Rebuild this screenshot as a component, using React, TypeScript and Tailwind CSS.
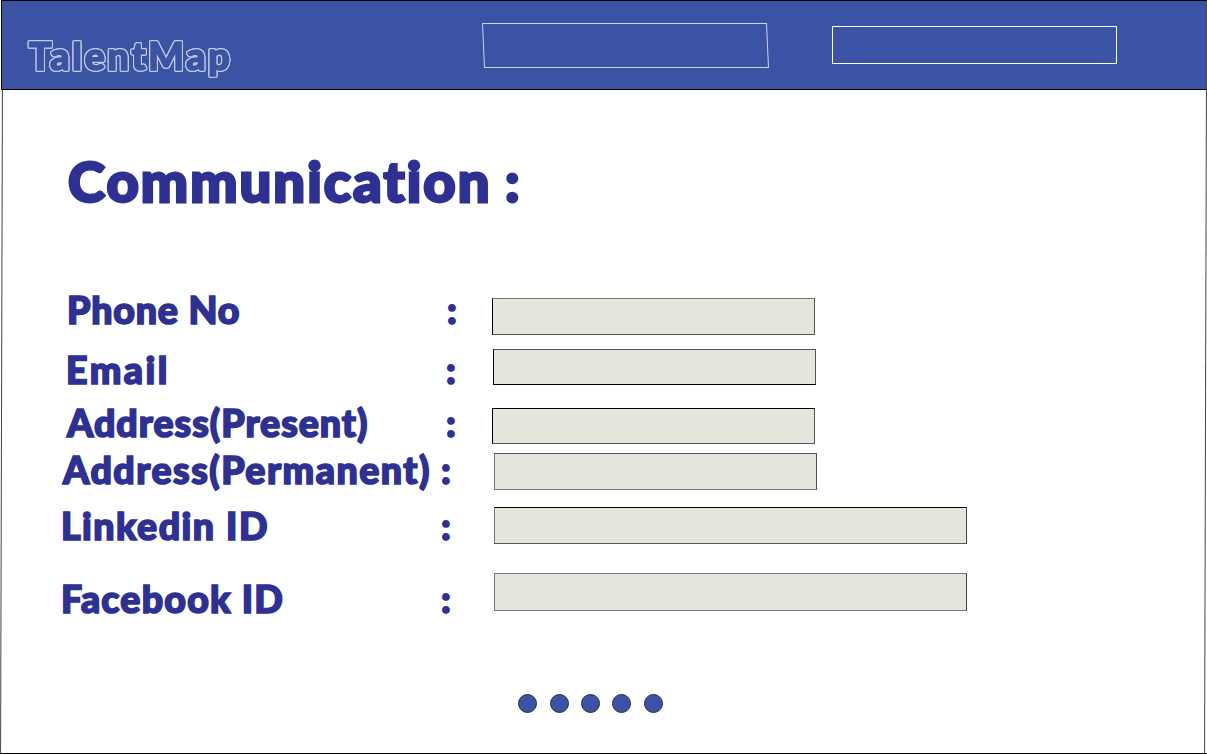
type Field = {
  label: string;
  row: string;
  text: string;
  colon: string;
  box: string;
};

const fields: Field[] = [
  { label: "Phone No", row: "h-[60px] pl-[67px]", text: "w-[380px] tracking-[0.8px]", colon: "w-[45px]", box: "mt-[8px] h-[37px] w-[323px] border-t-[#777] border-r-[#555] border-b-[#555]" },
  { label: "Email", row: "h-[53px] pl-[66px]", text: "w-[380px] tracking-[2.5px]", colon: "w-[47px]", box: "-mt-px h-[36px] w-[323px] border-t-[#555] border-r-[#555]" },
  { label: "Address(Present)", row: "h-[47px] pl-[67px]", text: "w-[379px] tracking-[1px]", colon: "w-[46px]", box: "mt-[5px] h-[36px] w-[323px] border-r-[#555] border-b-[#555]" },
  { label: "Address(Permanent)", row: "h-[56px] pl-[63px]", text: "w-[378px] tracking-[1.5px]", colon: "w-[53px]", box: "mt-[3px] h-[37px] w-[323px] border-t-[#555] border-r-[#555] border-b-[#777] border-l-[#777]" },
  { label: "Linkedin ID", row: "h-[73px] pl-[61px]", text: "w-[380px] tracking-[1.5px]", colon: "w-[53px]", box: "mt-px h-[37px] w-[473px] border-r-[#444] border-b-[#555] border-l-[#777]" },
  { label: "Facebook ID", row: "h-[40px] pl-[61px]", text: "w-[380px] tracking-[1.2px]", colon: "w-[53px]", box: "-mt-[6px] h-[38px] w-[473px] border-t-[#777] border-r-[#444] border-b-[#777] border-l-[#777]" },
];

const dots = ["ml-[518px]", "ml-[13px]", "ml-[12px]", "ml-[12px]", "ml-[13px]"];

function Header() {
  return (
    <header className="ml-px flex h-[90px] w-[1206px] border border-black border-r-[#4b4b5c] bg-[#3a53a4]">
      <div className="w-[481px] pt-[31px] pl-[27px]">
        <span className="block text-[37.5px] leading-[48px] font-black tracking-[2.8px] whitespace-nowrap text-[#3a53a4] [-webkit-text-stroke:1.6px_#3a53a4] [filter:drop-shadow(1px_0_0_#c3cae6)_drop-shadow(-1px_0_0_#c3cae6)_drop-shadow(0_1px_0_#c3cae6)_drop-shadow(0_-1px_0_#c3cae6)]">
          TalentMap
        </span>
      </div>
      <div className="mt-[22px] h-[45px] w-[285px] skew-x-[2.6deg] border border-[#cdd3ea]" />
      <div className="mt-[25px] ml-[64px] h-[38px] w-[285px] border border-white" />
    </header>
  );
}

export default function App() {
  return (
    <div className="flex h-[754px] w-[1207px] flex-col overflow-hidden bg-white font-['Lato',sans-serif] text-[#2e3192]">
      <Header />
      <main className="relative flex flex-1 flex-col border-b border-black">
        <div className="pointer-events-none absolute inset-y-0 right-[1px] left-[1px] skew-x-[-0.16deg] border-x border-[#444]" />
        <h1 className="flex h-[200px] pt-[57px] pl-[68px] text-[56px] leading-[67px] font-black whitespace-nowrap [-webkit-text-stroke:2.8px_#2e3192]">
          <span className="w-[437px] tracking-[2.1px]">Communication</span>
          <span>:</span>
        </h1>
        {fields.map((f) => (
          <label key={f.label} className={`flex items-start text-[37.5px] leading-[40px] font-black whitespace-nowrap [-webkit-text-stroke:1.7px_#2e3192] ${f.row}`}>
            <span className={f.text}>{f.label}</span>
            <span className={f.colon}>:</span>
            <span className={`block border border-black bg-[#e4e6dc] ${f.box}`} />
          </label>
        ))}
        <nav className="mt-[75px] flex">
          {dots.map((d, i) => (
            <span key={i} className={`size-[19px] rounded-full border border-[#252b48] bg-[#3a53a4] ${d}`} />
          ))}
        </nav>
      </main>
    </div>
  );
}
